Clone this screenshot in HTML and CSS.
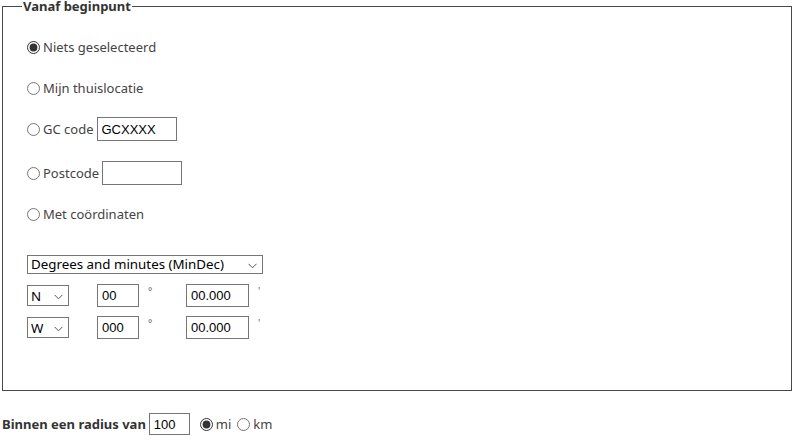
FILE: index.html
```html
<!DOCTYPE html>
<html lang="nl">
<head>
    <meta charset="UTF-8">
    <meta name="viewport" content="width=device-width, initial-scale=1.0">
    <title>Zoeken vanaf beginpunt</title>
    <link rel="stylesheet" href="styles.css">
</head>
<body>
    <fieldset class="origin">
        <legend>Vanaf beginpunt</legend>

        <div class="option">
            <input type="radio" name="origin" id="none" checked>
            <label for="none">Niets geselecteerd</label>
        </div>
        <div class="option">
            <input type="radio" name="origin" id="home">
            <label for="home">Mijn thuislocatie</label>
        </div>
        <div class="option gc">
            <input type="radio" name="origin" id="gc">
            <label for="gc">GC code</label>
            <input type="text" class="field wide" value="GCXXXX">
        </div>
        <div class="option">
            <input type="radio" name="origin" id="zip">
            <label for="zip">Postcode</label>
            <input type="text" class="field wide">
        </div>
        <div class="option">
            <input type="radio" name="origin" id="coords">
            <label for="coords">Met coördinaten</label>
        </div>

        <div class="coords">
            <span class="dropdown format">
                <select>
                    <option>Degrees and minutes (MinDec)</option>
                </select>
                <svg class="chevron" width="9" height="6" viewBox="0 0 9 6"><path d="M0.5 0.8 L4.5 4.8 L8.5 0.8" fill="none" stroke="#555" stroke-width="1"/></svg>
            </span>

            <div class="coord-row">
                <span class="dropdown dir">
                    <select><option>N</option><option>S</option></select>
                    <svg class="chevron" width="9" height="6" viewBox="0 0 9 6"><path d="M0.5 0.8 L4.5 4.8 L8.5 0.8" fill="none" stroke="#555" stroke-width="1"/></svg>
                </span>
                <input type="text" class="field deg" value="00">
                <span class="unit">°</span>
                <input type="text" class="field min" value="00.000">
                <span class="unit">'</span>
            </div>
            <div class="coord-row">
                <span class="dropdown dir">
                    <select><option>W</option><option>E</option></select>
                    <svg class="chevron" width="9" height="6" viewBox="0 0 9 6"><path d="M0.5 0.8 L4.5 4.8 L8.5 0.8" fill="none" stroke="#555" stroke-width="1"/></svg>
                </span>
                <input type="text" class="field deg" value="000">
                <span class="unit">°</span>
                <input type="text" class="field min" value="00.000">
                <span class="unit">'</span>
            </div>
        </div>
    </fieldset>

    <div class="radius">
        <strong>Binnen een radius van</strong>
        <input type="text" class="field distance" value="100">
        <input type="radio" name="unit" id="mi" checked>
        <label for="mi">mi</label>
        <input type="radio" name="unit" id="km">
        <label for="km">km</label>
    </div>
</body>
</html>
```

FILE: styles.css
```css
body {
    font-family: 'Noto Sans', sans-serif;
    font-size: 13px;
    color: #444;
    background-color: #fff;
    margin: 0;
    padding: 0;
}
.origin {
    margin: 0 6px 0 2px;
    padding: 25px 0 0 24px;
    height: 364px;
    border: 1px solid #4a4a45;
    box-sizing: content-box;
}
.origin legend {
    font-weight: bold;
    color: #333;
    line-height: 13px;
    padding: 0 1px;
    margin-left: -5px;
}
.option {
    display: flex;
    align-items: center;
    height: 18px;
    margin-bottom: 23px;
}
.option.gc {
    margin-bottom: 26px;
}
input[type="radio"] {
    width: 13px;
    height: 13px;
    margin: 0 3px 0 0;
    accent-color: #333;
}
.field {
    font-family: 'Liberation Sans', Arial, sans-serif;
    font-size: 13px;
    color: #000;
    border: 1px solid #767676;
    border-radius: 0;
    padding: 0 4px;
    box-sizing: border-box;
    height: 23px;
    outline: none;
}
.field.wide {
    width: 80px;
    height: 24px;
    margin-left: 3px;
}
.coords {
    margin-top: 32px;
}
.dropdown {
    position: relative;
    display: inline-block;
}
.dropdown select {
    appearance: none;
    font-family: 'Noto Sans', sans-serif;
    font-size: 13.33px;
    color: #000;
    background-color: #fff;
    border: 1px solid #767676;
    border-radius: 0;
    padding: 0 3px;
    display: block;
}
.dropdown .chevron {
    position: absolute;
    right: 6px;
    top: 50%;
    margin-top: -2px;
    pointer-events: none;
}
.format select {
    width: 236px;
    height: 19px;
    line-height: 17px;
}
.coord-row {
    display: grid;
    grid-template-columns: 70px 51px 38px 72px 10px;
    justify-items: start;
    align-items: center;
    height: 23px;
    margin-top: 10px;
}
.coord-row + .coord-row {
    margin-top: 9px;
}
.dir select {
    width: 42px;
    height: 21px;
}
.field.deg {
    width: 42px;
}
.field.min {
    width: 63px;
}
.unit {
    font-size: 10px;
    color: #666;
    align-self: start;
    line-height: 14px;
}
.radius {
    display: flex;
    align-items: center;
    margin: 22px 0 0 2px;
    height: 22px;
}
.radius strong {
    color: #333;
    margin-right: 3px;
}
.field.distance {
    width: 41px;
    height: 22px;
    margin-right: 10px;
}
.radius label {
    margin-right: 6px;
}
```
